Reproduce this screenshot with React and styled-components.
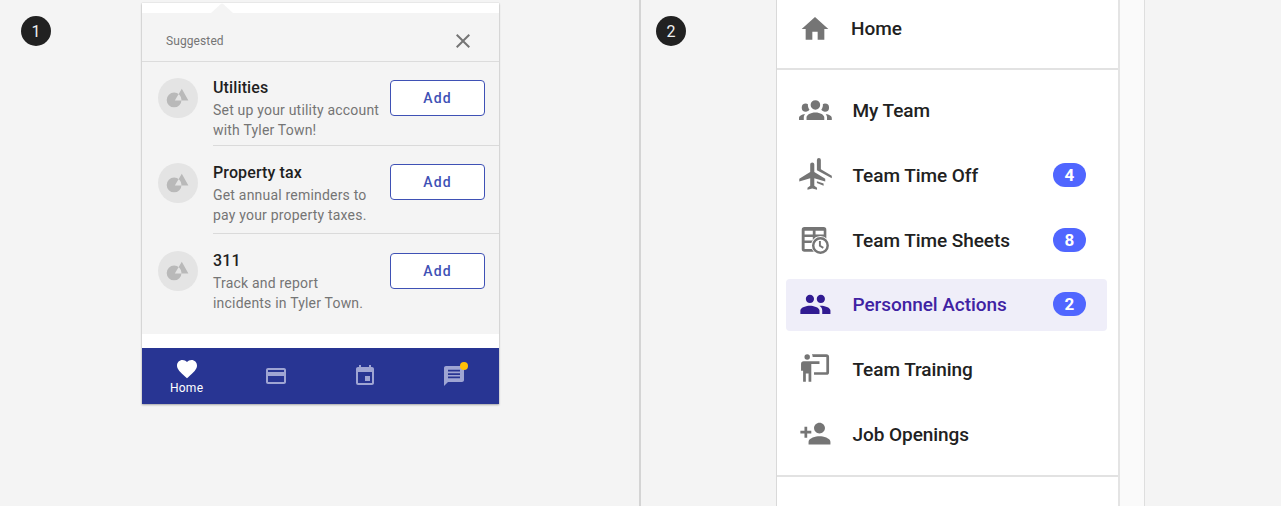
import React from "react";
import styled, { createGlobalStyle } from "styled-components";

const GlobalStyle = createGlobalStyle`
  * { box-sizing: border-box; }
  body { margin: 0; background: #f4f4f4; font-family: Roboto, sans-serif; overflow: hidden; }
`;

const Page = styled.main`
  display: flex;
  width: 1281px;
  height: 506px;
  overflow: hidden;
  background: #f4f4f4;
`;

const Panel = styled.section`
  display: flex;
  align-items: flex-start;
  flex: none;
  width: ${(p) => p.$width}px;
  height: 506px;
  padding-left: ${(p) => p.$inset}px;
  border-right: ${(p) => (p.$divided ? "2px solid #d4d4d4" : "none")};
`;

const Step = styled.div`
  display: flex;
  align-items: center;
  justify-content: center;
  flex: none;
  width: 30px;
  height: 30px;
  margin-top: 16px;
  border-radius: 50%;
  background: #212121;
  color: #f0f0f0;
  font-size: 16px;
`;

const Icon = styled.svg`
  display: block;
  flex: none;
  width: ${(p) => p.$size}px;
  height: ${(p) => p.$size}px;
  overflow: visible;
  fill: currentColor;
`;

/* Phone card */

const Phone = styled.div`
  display: flex;
  flex-direction: column;
  width: 357px;
  height: 401px;
  margin: 3px 0 0 91px;
  background: #fff;
  box-shadow: 0 1px 2px rgba(0, 0, 0, 0.3), 0 0 1px rgba(0, 0, 0, 0.16);
`;

const Notch = styled.svg`
  display: block;
  width: 22px;
  height: 10px;
  margin-left: 69px;
  fill: #f4f4f4;
`;

const Suggestions = styled.div`
  height: 321px;
  background: #f4f4f4;
`;

const SuggestHeader = styled.header`
  display: flex;
  align-items: center;
  justify-content: space-between;
  height: 49px;
  padding: 7px 24px 0;
  border-bottom: 1px solid #dcdcdc;
  color: #757575;
  font-size: 12px;
  letter-spacing: 0.1px;
`;

const Suggestion = styled.article`
  display: flex;
  height: ${(p) => p.$height}px;
  padding-left: 16px;
`;

const Avatar = styled.div`
  display: flex;
  align-items: center;
  justify-content: center;
  flex: none;
  width: 40px;
  height: 40px;
  margin-top: ${(p) => p.$top}px;
  border-radius: 50%;
  background: #e4e4e4;
  color: #b9b9b9;
`;

const SuggestBody = styled.div`
  display: flex;
  justify-content: space-between;
  align-items: flex-start;
  flex: 1;
  margin-left: 15px;
  padding-right: 14px;
  border-bottom: ${(p) => (p.$last ? "none" : "1px solid #dadada")};
`;

const SuggestText = styled.div`
  padding-top: ${(p) => p.$top}px;
  white-space: nowrap;
`;

const SuggestTitle = styled.h3`
  margin: 0;
  color: #1f1f1f;
  font-size: 16px;
  font-weight: 500;
  line-height: 24px;
  letter-spacing: 0.12px;
`;

const SuggestCopy = styled.p`
  margin: 0;
  color: #757575;
  font-size: 14px;
  line-height: 20px;
  letter-spacing: 0.2px;
`;

const AddButton = styled.button`
  flex: none;
  width: 95px;
  height: 36px;
  margin: ${(p) => p.$top}px 0 0;
  padding: 0;
  border: 1px solid #3f51b5;
  border-radius: 4px;
  background: #fff;
  color: #3f51b5;
  font: 500 14px Roboto, sans-serif;
  letter-spacing: 1.1px;
`;

const TabBar = styled.nav`
  display: flex;
  height: 56px;
  margin-top: 14px;
  background: #283593;
`;

const Tab = styled.div`
  display: flex;
  flex: 1;
  flex-direction: column;
  align-items: center;
  justify-content: center;
  padding-top: ${(p) => (p.$active ? 1 : 0)}px;
  color: ${(p) => (p.$active ? "#fff" : "#9fa5d3")};
  font-size: 12px;
  line-height: 15px;
  letter-spacing: 0.25px;
`;

const TabIcon = styled.div`
  position: relative;
`;

const Dot = styled.span`
  position: absolute;
  top: -2px;
  right: -2px;
  width: 8px;
  height: 8px;
  border-radius: 50%;
  background: #ffc107;
`;

/* Side navigation */

const Drawer = styled.aside`
  display: flex;
  flex-direction: column;
  flex: none;
  width: 344px;
  height: 506px;
  margin-left: 90px;
  border-left: 1px solid #d9d9d9;
  border-right: 2px solid #e4e4e4;
  background: #fff;
`;

const Gutter = styled.div`
  width: 25px;
  height: 506px;
  border-right: 1px solid #dedede;
  background: #fafafa;
`;

const DrawerTop = styled.div`
  height: 70px;
  padding: 3px 11px 0 9px;
  border-bottom: 2px solid #e2e2e2;
`;

const DrawerList = styled.div`
  display: flex;
  flex-direction: column;
  gap: 13px;
  height: 407px;
  padding: 15px 11px 0 9px;
  border-bottom: 2px solid #e2e2e2;
`;

const NavItem = styled.div`
  display: flex;
  align-items: center;
  flex: none;
  height: 51.8px;
  padding: 0 21px ${(p) => (p.$compact ? 0 : 1.6)}px 12.5px;
  border-radius: 4px;
  background: ${(p) => (p.$active ? "#efeef9" : "transparent")};
  color: ${(p) => (p.$active ? "#311b92" : "#757575")};
`;

const NavLabel = styled.span`
  flex: 1;
  margin-left: ${(p) => (p.$compact ? 20.5 : 21.2)}px;
  padding-top: ${(p) => (p.$compact ? 0 : 1)}px;
  color: ${(p) => (p.$active ? "#3f22a3" : "#212121")};
  font-size: 19px;
  font-weight: 500;
  letter-spacing: -0.06px;
  white-space: nowrap;
`;

const Count = styled.span`
  display: flex;
  align-items: center;
  justify-content: center;
  width: 33px;
  height: 24px;
  border-radius: 12px;
  background: #5066ff;
  color: #fff;
  font-size: 17px;
  font-weight: 700;
`;

const paths = {
  home: <path d="M10 20v-6h4v6h5v-8h3L12 3 2 12h3v8z" />,
  team: (
    <path
      transform="translate(0 -1)"
      d="M12 5.5A3.5 3.5 0 0 1 15.5 9 3.5 3.5 0 0 1 12 12.5 3.5 3.5 0 0 1 8.5 9 3.5 3.5 0 0 1 12 5.5M5 8c.56 0 1.08.15 1.53.42-.15 1.43.27 2.85 1.13 3.96C7.16 13.34 6.16 14 5 14a3 3 0 0 1-3-3 3 3 0 0 1 3-3m14 0a3 3 0 0 1 3 3 3 3 0 0 1-3 3c-1.16 0-2.16-.66-2.66-1.62.86-1.11 1.28-2.53 1.13-3.96C17.92 8.15 18.44 8 19 8M5.5 18.25c0-2.07 2.91-3.75 6.5-3.75s6.5 1.68 6.5 3.75V20h-13v-1.75M0 20v-1.5c0-1.39 1.89-2.56 4.45-2.9-.59.68-.95 1.62-.95 2.65V20H0m24 0h-3.5v-1.75c0-1.03-.36-1.97-.95-2.65 2.56.34 4.45 1.51 4.45 2.9V20z"
    />
  ),
  planes: (
    <g transform="translate(0 -1.4)">
      <path
        transform="translate(-1.8 1.9)"
        d="M21 16v-2l-8-5V3.5c0-.83-.67-1.5-1.5-1.5S10 2.67 10 3.5V9l-8 5v2l8-2.5V19l-2 1.5V22l3.5-1 3.5 1v-1.5L13 19v-5.5l8 2.5z"
      />
      <path d="M13.1 3V2.200a1.450 1.450 0 0 1 2.900 0v6.700l8 4.700v1.800L13.100 9.600zM13.100 17.700l4.900 1.700v1.600l-4.900-2z" />
    </g>
  ),
  sheet: (
    <>
      <path
        fillRule="evenodd"
        d="M4 3h14a2 2 0 0 1 2 2v9l-8 7H4a2 2 0 0 1-2-2V5a2 2 0 0 1 2-2zm.1 2.700v2.800h6V5.700zm8 0v2.800h6V5.700zm-8 4.500v2.600h6v-2.600zm8 0v2.600h6v-2.600zm-8 4.500v4.400h6v-4.400z"
      />
      <circle cx="15.7" cy="16.4" r="6.8" fill="#fff" />
      <circle cx="15.7" cy="16.4" r="5.3" fill="none" stroke="currentColor" strokeWidth="1.8" />
      <path d="M15.3 13.100v3.600l2.500 1.500" fill="none" stroke="currentColor" strokeWidth="1.4" />
    </>
  ),
  people: (
    <path d="M16 11c1.66 0 2.99-1.34 2.99-3S17.66 5 16 5s-3 1.34-3 3 1.34 3 3 3zm-8 0c1.66 0 2.99-1.34 2.99-3S9.66 5 8 5 5 6.34 5 8s1.34 3 3 3zm0 2c-2.33 0-7 1.17-7 3.5V19h14v-2.5c0-2.33-4.67-3.5-7-3.5zm8 0c-.29 0-.62.02-.97.05 1.16.84 1.97 1.97 1.97 3.45V19h6v-2.5c0-2.33-4.67-3.5-7-3.5z" />
  ),
  training: (
    <path
      transform="translate(0 -1)"
      d="M20 17a2 2 0 0 0 2-2V4a2 2 0 0 0-2-2H9.46c.35.61.54 1.3.54 2h10v11h-9v2M15 7v2H9v13H7v-6H5v6H3v-8H1.5V9a2 2 0 0 1 2-2H15M8 4a2 2 0 0 1-2 2 2 2 0 0 1-2-2 2 2 0 0 1 2-2 2 2 0 0 1 2 2z"
    />
  ),
  openings: (
    <path
      transform="translate(0 -.6)"
      d="M15 12c2.210 0 4-1.790 4-4s-1.790-4-4-4-4 1.790-4 4 1.790 4 4 4zm-9-2V7H4v3H1v2h3v3h2v-3h3v-2H6zm9 4c-2.670 0-8 1.340-8 4v2h16v-2c0-2.660-5.330-4-8-4z"
    />
  ),
  close: <path d="M19 6.410 17.590 5 12 10.590 6.410 5 5 6.410 10.590 12 5 17.590 6.410 19 12 13.410 17.590 19 19 17.590 13.410 12z" />,
  heart: (
    <path d="m12 21.350-1.450-1.320C5.400 15.360 2 12.280 2 8.500 2 5.420 4.420 3 7.500 3c1.740 0 3.410.81 4.500 2.090C13.090 3.810 14.760 3 16.500 3 19.580 3 22 5.420 22 8.500c0 3.780-3.400 6.860-8.550 11.540z" />
  ),
  card: (
    <path d="M20 4H4c-1.110 0-1.990.89-1.990 2L2 18c0 1.110.89 2 2 2h16c1.110 0 2-.89 2-2V6c0-1.110-.89-2-2-2zm0 14H4v-6h16zm0-10H4V6h16z" />
  ),
  event: (
    <path d="M17 12h-5v5h5zM16 1v2H8V1H6v2H5c-1.110 0-1.990.9-1.990 2L3 19a2 2 0 0 0 2 2h14c1.100 0 2-.9 2-2V5c0-1.100-.9-2-2-2h-1V1zm3 18H5V8h14z" />
  ),
  chat: (
    <path d="M20 2H4c-1.100 0-1.990.9-1.990 2L2 22l4-4h14c1.100 0 2-.9 2-2V4c0-1.100-.9-2-2-2zM6 5.800h12v1.700H6zm0 3.400h12v1.700H6zm0 3.300h12v1.700H6z" />
  ),
  shapes: (
    <path
      transform="translate(-.4 -.3)"
      fillRule="evenodd"
      d="M1.100 14.200a7.400 7.400 0 1 0 14.800 0 7.400 7.400 0 1 0-14.800 0zM16.200 3l6.600 11.700H9.200z"
    />
  ),
};

const Glyph = ({ name, size = 24 }) => (
  <Icon viewBox="0 0 24 24" $size={size} aria-hidden="true">
    {paths[name]}
  </Icon>
);

const suggestions = [
  { title: "Utilities", lines: ["Set up your utility account", "with Tyler Town!"], height: 84, avatar: 15.5, text: 14, button: 18 },
  { title: "Property tax", lines: ["Get annual reminders to", "pay your property taxes."], height: 88, avatar: 17, text: 15, button: 18 },
  { title: "311", lines: ["Track and report", "incidents in Tyler Town."], height: 88, avatar: 17, text: 15, button: 19 },
];

const navItems = [
  { icon: "team", label: "My Team" },
  { icon: "planes", label: "Team Time Off", count: 4 },
  { icon: "sheet", label: "Team Time Sheets", count: 8 },
  { icon: "people", label: "Personnel Actions", count: 2, active: true },
  { icon: "training", label: "Team Training" },
  { icon: "openings", label: "Job Openings" },
];

export default function App() {
  return (
    <>
      <GlobalStyle />
      <Page>
        <Panel $width={641} $inset={21} $divided>
          <Step>1</Step>
          <Phone>
            <Notch viewBox="0 0 22 10">
              <path d="M0 10 9.500 1.200Q11 0 12.500 1.200L22 10z" />
            </Notch>
            <Suggestions>
              <SuggestHeader>
                Suggested
                <Glyph name="close" />
              </SuggestHeader>
              {suggestions.map((s, i) => (
                <Suggestion key={s.title} $height={s.height}>
                  <Avatar $top={s.avatar}>
                    <Glyph name="shapes" />
                  </Avatar>
                  <SuggestBody $last={i === suggestions.length - 1}>
                    <SuggestText $top={s.text}>
                      <SuggestTitle>{s.title}</SuggestTitle>
                      <SuggestCopy>
                        {s.lines[0]}
                        <br />
                        {s.lines[1]}
                      </SuggestCopy>
                    </SuggestText>
                    <AddButton $top={s.button}>Add</AddButton>
                  </SuggestBody>
                </Suggestion>
              ))}
            </Suggestions>
            <TabBar>
              <Tab $active>
                <Glyph name="heart" />
                Home
              </Tab>
              <Tab>
                <Glyph name="card" />
              </Tab>
              <Tab>
                <Glyph name="event" />
              </Tab>
              <Tab>
                <TabIcon>
                  <Glyph name="chat" />
                  <Dot />
                </TabIcon>
              </Tab>
            </TabBar>
          </Phone>
        </Panel>
        <Panel $width={640} $inset={15}>
          <Step>2</Step>
          <Drawer>
            <DrawerTop>
              <NavItem $compact>
                <Glyph name="home" size={32} />
                <NavLabel $compact>Home</NavLabel>
              </NavItem>
            </DrawerTop>
            <DrawerList>
              {navItems.map((n) => (
                <NavItem key={n.label} $active={n.active}>
                  <Glyph name={n.icon} size={32.8} />
                  <NavLabel $active={n.active}>{n.label}</NavLabel>
                  {n.count && <Count>{n.count}</Count>}
                </NavItem>
              ))}
            </DrawerList>
          </Drawer>
          <Gutter />
        </Panel>
      </Page>
    </>
  );
}
